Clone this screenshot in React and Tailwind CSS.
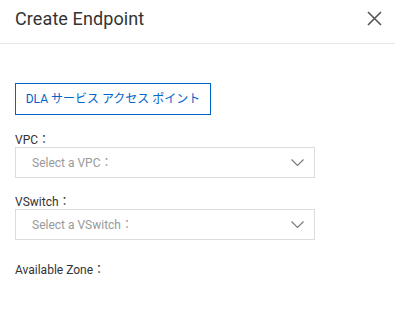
import React from 'react';

const Chevron = () => (
  <svg width="13" height="7" viewBox="0 0 13 7" fill="none" className="text-[#777]">
    <path d="M0.5 0.5l6 6 6-6" stroke="currentColor" strokeWidth="1.1" />
  </svg>
);

const Select = ({ placeholder }) => (
  <div className="flex h-[31px] w-[300px] items-center justify-between border border-[#dcdcdc] bg-white pl-4 pr-[10px]">
    <span className="text-[12px] text-[#999]">{placeholder}</span>
    <Chevron />
  </div>
);

const App = () => {
  return (
    <div className="h-[328px] w-[395px] bg-white text-[#333] [font-family:Roboto,'Noto_Sans_CJK_JP',sans-serif]">
      {/* Header */}
      <div className="flex h-[44px] items-center justify-between border-b border-[#e8e8e8] pl-[15px] pr-[11px]">
        <h1 className="-mt-[7px] text-[18px] font-normal tracking-[0.1px] text-[#333]">Create Endpoint</h1>
        <button className="-mt-[7px] flex h-[20px] w-[20px] items-center justify-center text-[#555]">
          <svg width="15" height="15" viewBox="0 0 15 15" fill="none">
            <path d="M1 1l13 13M14 1L1 14" stroke="currentColor" strokeWidth="1.6" />
          </svg>
        </button>
      </div>

      {/* Body */}
      <div className="px-[15px] pt-[39px]">
        <button className="h-[32px] w-[196px] border border-[#0064c8] text-[12px] text-[#0064c8]">
          DLA サービス アクセス ポイント
        </button>

        <div className="mt-[18px]">
          <label className="block text-[12px] leading-[14px]">VPC：</label>
          <Select placeholder="Select a VPC：" />
        </div>

        <div className="mt-[17px]">
          <label className="block text-[12px] leading-[14px]">VSwitch：</label>
          <Select placeholder="Select a VSwitch：" />
        </div>

        <div className="mt-[23px]">
          <label className="block text-[12px] leading-[14px]">Available Zone：</label>
        </div>
      </div>
    </div>
  );
};

export default App;
